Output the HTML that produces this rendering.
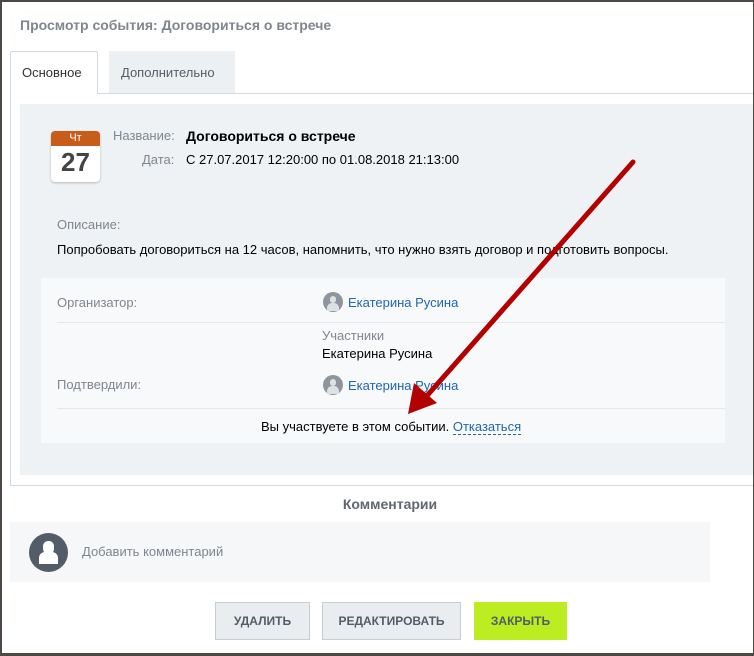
<!DOCTYPE html>
<html><head><meta charset="utf-8"><style>
*{margin:0;padding:0;box-sizing:border-box}
body{width:754px;height:656px;overflow:hidden;background:#fff;font-family:"Liberation Sans",Arial,sans-serif;position:relative;font-size:13px;color:#000}
.a{position:absolute}
.frame{position:absolute;left:0;top:0;width:754px;height:656px;border:2px solid #4e4844;border-right-width:1px;border-bottom-width:3px;z-index:5;pointer-events:none}
.lbl{color:#80868e}
.link{color:#2067b0}
.btn{position:absolute;top:602px;height:38px;border:1px solid #c6cdd3;background:#eaedef;color:#535c69;font-weight:bold;font-size:12px;text-align:center;line-height:36px}
.av{position:absolute;width:20px;height:20px;border-radius:50%;background:#8e959c;overflow:hidden}
.av:before{content:"";position:absolute;left:7px;top:4px;width:6px;height:7px;border-radius:3px;background:#dde1e4}
.av:after{content:"";position:absolute;left:4px;top:11px;width:12px;height:8px;border-radius:5px 5px 0 0;background:#dde1e4}
</style></head><body>
<div class="frame"></div>
<div class="a" style="left:20px;top:17px;font-size:14px;font-weight:bold;color:#80868e">Просмотр события: Договориться о встрече</div>
<div class="a" style="left:97px;top:93px;width:657px;height:1px;background:#d5d9dc"></div>
<div class="a" style="left:10px;top:51px;width:88px;height:43px;border:1px solid #d5d9dc;border-bottom:none;background:#fff;border-radius:2px 2px 0 0"></div>
<div class="a" style="left:22px;top:65px;color:#333">Основное</div>
<div class="a" style="left:109px;top:51px;width:126px;height:42px;background:#edf0f2"></div>
<div class="a" style="left:121px;top:65px;color:#535c69">Дополнительно</div>
<div class="a" style="left:10px;top:93px;width:744px;height:393px;border:1px solid #d5d9dc;border-top:none;border-right:none"></div>
<div class="a" style="left:20px;top:104px;width:734px;height:371px;background:#eef2f4"></div>
<div class="a" style="left:51px;top:131px;width:49px;height:51px;background:#fff;border-radius:4px;box-shadow:0 1px 2px rgba(0,0,0,.25);overflow:hidden">
<div style="height:15px;background:#c85c1b;color:#fff;font-size:11px;text-align:center;line-height:15px">Чт</div>
<div style="font-size:26px;font-weight:bold;color:#444;text-align:center;line-height:32px">27</div></div>
<div class="a lbl" style="left:113px;top:128px">Название:</div>
<div class="a" style="left:186px;top:128px;font-weight:bold;font-size:14px">Договориться о встрече</div>
<div class="a lbl" style="left:142px;top:152px">Дата:</div>
<div class="a" style="left:186px;top:152px">С 27.07.2017 12:20:00 по 01.08.2018 21:13:00</div>
<div class="a lbl" style="left:57px;top:217px">Описание:</div>
<div class="a" style="left:57px;top:242px">Попробовать договориться на 12 часов, напомнить, что нужно взять договор и подготовить вопросы.</div>
<div class="a" style="left:41px;top:278px;width:684px;height:165px;background:#f7f9fa"></div>
<div class="a lbl" style="left:57px;top:295px">Организатор:</div>
<div class="av" style="left:323px;top:292px"></div>
<div class="a link" style="left:348px;top:295px">Екатерина Русина</div>
<div class="a" style="left:57px;top:322px;width:668px;height:1px;background:#e3e7ea"></div>
<div class="a lbl" style="left:322px;top:328px">Участники</div>
<div class="a" style="left:322px;top:346px">Екатерина Русина</div>
<div class="a lbl" style="left:57px;top:377px">Подтвердили:</div>
<div class="av" style="left:323px;top:375px"></div>
<div class="a link" style="left:348px;top:378px">Екатерина Русина</div>
<div class="a" style="left:57px;top:408px;width:668px;height:1px;background:#e3e7ea"></div>
<div class="a" style="left:261px;top:419px">Вы участвуете в этом событии. <span class="link" style="border-bottom:1px dashed #2067b0">Отказаться</span></div>
<div class="a" style="left:0;top:496px;width:780px;text-align:center;font-weight:bold;font-size:14px;color:#60666e">Комментарии</div>
<div class="a" style="left:10px;top:522px;width:700px;height:60px;background:#f5f7f8"></div>
<div class="a" style="left:29px;top:533px;width:39px;height:39px;border-radius:50%;background:#535c69;overflow:hidden">
<div style="position:absolute;left:14px;top:8px;width:11px;height:13px;border-radius:5px;background:#fff"></div>
<div style="position:absolute;left:10px;top:19px;width:19px;height:12px;border-radius:6px 6px 0 0;background:#fff"></div></div>
<div class="a" style="left:82px;top:544px;color:#80868e">Добавить комментарий</div>
<div class="btn" style="left:215px;width:95px">УДАЛИТЬ</div>
<div class="btn" style="left:322px;width:139px">РЕДАКТИРОВАТЬ</div>
<div class="btn" style="left:474px;width:93px;background:#bbed21;border-color:#bbed21">ЗАКРЫТЬ</div>
<svg class="a" style="left:0;top:0;z-index:4" width="754" height="656"><line x1="633" y1="162" x2="425" y2="398" stroke="#b30000" stroke-width="5" stroke-linecap="round"/><polygon points="408,414 414,383 437,403" fill="#b30000"/></svg>
</body></html>
